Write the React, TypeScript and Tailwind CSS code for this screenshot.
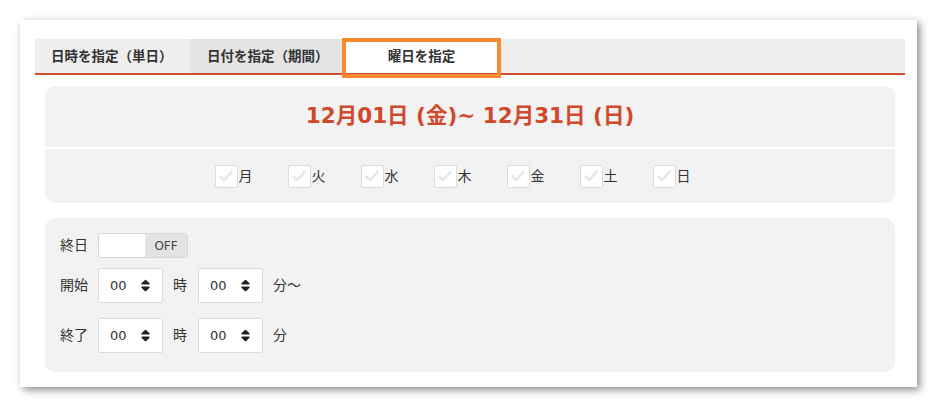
import React from 'react';
import { FaSort } from 'react-icons/fa';

const FONT = "font-['DejaVu_Sans','Noto_Sans_CJK_JP',sans-serif]";

const weekdays = ['月', '火', '水', '木', '金', '土', '日'];

function Check({ label }: { label: string }) {
  return (
    <div className="flex w-[73px] items-center">
      <span className="flex h-[23px] w-[23px] items-center justify-center rounded-[2px] border-[1.5px] border-[#dcdcdc] bg-white">
        <svg width="16" height="16" viewBox="0 0 16 16" fill="none">
          <path d="M2.5 8.5l3.5 3.5 7.5-8" stroke="#e8e8e8" strokeWidth="2.6" strokeLinecap="round" strokeLinejoin="round" />
        </svg>
      </span>
      <span className="ml-px text-[14px] text-[#333]">{label}</span>
    </div>
  );
}

function TimeSelect() {
  return (
    <div className="flex h-[35px] w-[65px] items-center justify-between rounded-[2px] border border-[#dcdcdc] bg-white pl-[11px] pr-[9px] text-[13px] text-[#333]">
      <span>00</span>
      <FaSort size={15} className="text-[#222]" />
    </div>
  );
}

function TimeRow({ label, suffix, className }: { label: string; suffix: string; className?: string }) {
  return (
    <div className={`flex h-[35px] items-center text-[14px] text-[#333] ${className ?? ''}`}>
      <span className="w-[38px]">{label}</span>
      <TimeSelect />
      <span className="ml-[10px] mr-[11px]">時</span>
      <TimeSelect />
      <span className="ml-[10px]">{suffix}</span>
    </div>
  );
}

export default function App() {
  return (
    <div className={`min-h-[407px] bg-white p-5 ${FONT}`}>
      <div className="h-[367px] w-[897px] bg-white pl-[15px] pr-[12px] pt-[19px] shadow-[3px_3px_8px_rgba(0,0,0,0.45)]">
        {/* tabs */}
        <div className="flex h-[36px] border-b-2 border-[#d0502e] bg-[#eeeeee] text-[13.5px] font-bold text-[#333]">
          <div className="flex w-[155px] items-center pl-4">日時を指定（単日）</div>
          <div className="flex w-[152px] items-center bg-[#e4e4e4] pl-[17px]">日付を指定（期間）</div>
          <div className="relative flex w-[159px] items-center justify-center bg-white">
            曜日を指定
            <span className="absolute -top-px -bottom-[5px] left-0 right-0 border-4 border-[#fb8a2e]" />
          </div>
        </div>

        {/* period */}
        <div className="mx-[10px] mt-[11px] overflow-hidden rounded-[10px]">
          <div className="flex h-[61px] items-center justify-center bg-[#f2f2f2] pb-px text-[21.5px] font-bold text-[#cf4a2a]">
            12月01日 (金)~ 12月31日 (日)
          </div>
          <div className="mt-[2px] flex h-[54px] items-center justify-center bg-[#f2f2f2]">
            {weekdays.map((d) => (
              <Check key={d} label={d} />
            ))}
          </div>
        </div>

        {/* time */}
        <div className="mx-[10px] mt-[15px] h-[154px] rounded-[10px] bg-[#f2f2f2] px-[15px] pt-[15px]">
          <div className="flex h-[25px] items-center text-[14px] text-[#333]">
            <span className="w-[38px]">終日</span>
            <div className="flex h-[25px] w-[90px] overflow-hidden rounded-[3px] border border-[#d6d6d6]">
              <span className="w-[46px] bg-white" />
              <span className="flex flex-1 items-center justify-center bg-[#e3e3e3] text-[12px] text-[#444]">OFF</span>
            </div>
          </div>
          <TimeRow label="開始" suffix="分〜" className="mt-[10px]" />
          <TimeRow label="終了" suffix="分" className="mt-[15px]" />
        </div>
      </div>
    </div>
  );
}
